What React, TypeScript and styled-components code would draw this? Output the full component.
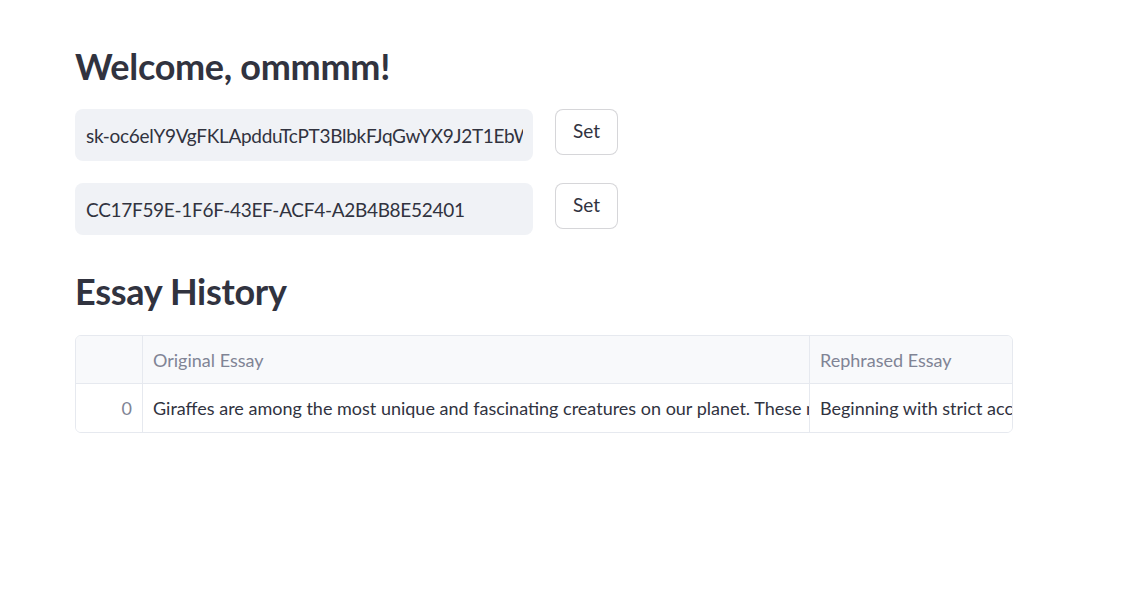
import React from 'react'
import styled, { createGlobalStyle } from 'styled-components'

const GlobalStyle = createGlobalStyle`
  body {
    margin: 0;
    background: #ffffff;
    font-family: Lato, "Noto Sans", sans-serif;
    color: #31333F;
  }
`

const Main = styled.main`
  padding: 40px 75px 0 75px;
  width: 938px;
`

const Heading = styled.h2<{ $mt?: number }>`
  margin: ${(p) => p.$mt || 0}px 0 0 0;
  font-size: 36px;
  font-weight: 700;
  line-height: 52px;
  color: #31333F;
  letter-spacing: -0.3px;
`

const InputRow = styled.div<{ $mt: number }>`
  display: flex;
  align-items: flex-start;
  gap: 22px;
  margin-top: ${(p) => p.$mt}px;
`

const TextField = styled.div`
  box-sizing: border-box;
  width: 458px;
  height: 52px;
  padding: 0 10px 0 11px;
  background: #f0f2f6;
  border-radius: 8px;
  display: flex;
  align-items: center;
`

const FieldValue = styled.span`
  flex: 1;
  font-size: 19px;
  letter-spacing: -0.3px;
  color: #31333F;
  white-space: nowrap;
  overflow: hidden;
`

const SetButton = styled.button`
  box-sizing: border-box;
  width: 63px;
  height: 46px;
  background: #ffffff;
  border: 1px solid rgba(49, 51, 63, 0.2);
  border-radius: 8px;
  font-family: inherit;
  font-size: 19px;
  color: #31333F;
  padding: 0 0 4px 0;
`

const Table = styled.div`
  margin-top: 18px;
  width: 938px;
  box-sizing: border-box;
  border: 1px solid #e6e9ef;
  border-radius: 6px;
  overflow: hidden;
  display: grid;
  grid-template-columns: 67px 667px 1fr;
`

const Cell = styled.div<{ $head?: boolean; $index?: boolean; $last?: boolean }>`
  height: 48px;
  box-sizing: border-box;
  display: flex;
  align-items: center;
  justify-content: ${(p) => (p.$index && !p.$head ? 'flex-end' : 'flex-start')};
  padding: 0 10px;
  background: ${(p) => (p.$head ? '#f8f9fb' : '#ffffff')};
  color: ${(p) => (p.$head || p.$index ? '#808495' : '#31333F')};
  font-size: 18px;
  white-space: nowrap;
  overflow: hidden;
  border-right: ${(p) => (p.$last ? 'none' : '1px solid #e6e9ef')};
  border-bottom: ${(p) => (p.$head ? '1px solid #e6e9ef' : 'none')};
`

export default function App() {
  return (
    <>
      <GlobalStyle />
      <Main>
        <Heading>Welcome, ommmm!</Heading>
        <InputRow $mt={17}>
          <TextField>
            <FieldValue>sk-oc6elY9VgFKLApdduTcPT3BlbkFJqGwYX9J2T1EbWq</FieldValue>
          </TextField>
          <SetButton>Set</SetButton>
        </InputRow>
        <InputRow $mt={22}>
          <TextField>
            <FieldValue>CC17F59E-1F6F-43EF-ACF4-A2B4B8E52401</FieldValue>
          </TextField>
          <SetButton>Set</SetButton>
        </InputRow>
        <Heading $mt={30}>Essay History</Heading>
        <Table>
          <Cell $head $index />
          <Cell $head>Original Essay</Cell>
          <Cell $head $last>Rephrased Essay</Cell>
          <Cell $index>0</Cell>
          <Cell>Giraffes are among the most unique and fascinating creatures on our planet. These magnificent animals</Cell>
          <Cell $last>Beginning with strict accuracy and attention to detail</Cell>
        </Table>
      </Main>
    </>
  )
}
